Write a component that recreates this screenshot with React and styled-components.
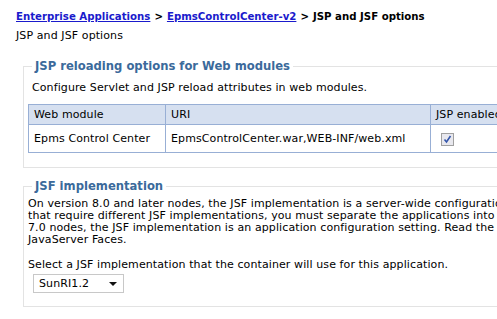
import React from 'react';
import styled, { createGlobalStyle } from 'styled-components';


const GlobalStyle = createGlobalStyle`
  html, body {
    margin: 0;
    padding: 0;
    background: #ffffff;
    overflow: hidden;
  }
  body {
    font-family: "DejaVu Sans", Verdana, sans-serif;
    font-size: 11px;
    letter-spacing: 0.1px;
    color: #000000;
  }
`;

const Page = styled.div`
  width: 640px;
  padding: 10px 0 0 16px;
`;

const Breadcrumb = styled.div`
  font-size: 10.2px;
  font-weight: bold;
  letter-spacing: 0;
  line-height: 13px;
  white-space: nowrap;
`;

const Crumb = styled.a`
  color: #1a1acc;
  text-decoration: underline;
  cursor: pointer;
`;

const Sep = styled.span`
  margin: 0 4px;
`;

const Subtitle = styled.div`
  margin-top: 6px;
  line-height: 13px;
`;

const Group = styled.fieldset`
  margin: ${p => p.$top}px 0 0 7px;
  padding: 0 0 ${p => p.$bottom}px 4px;
  border: 1px solid #e3e3e3;
  min-width: 0;
`;

const Legend = styled.legend`
  margin-left: 4px;
  padding: 0 3px;
  font-size: 11.6px;
  font-weight: bold;
  letter-spacing: 0;
  line-height: 16px;
  color: #3b6a9b;
  white-space: nowrap;
`;

const Intro = styled.p`
  margin: 7px 0 0 4px;
  line-height: 14px;
  white-space: nowrap;
`;

const Table = styled.table`
  margin-top: 9px;
  border-collapse: collapse;
  width: 640px;
`;

const Th = styled.th`
  height: 19px;
  padding: 0 5px;
  border: 1px solid #98afd5;
  background: #d6e0f0;
  font-weight: normal;
  text-align: left;
  white-space: nowrap;
  width: ${p => p.$w ? `${p.$w}px` : 'auto'};
`;

const Td = styled.td`
  height: 27px;
  padding: 0 5px;
  border: 1px solid #98afd5;
  white-space: nowrap;
`;

const Check = styled.span`
  display: inline-flex;
  align-items: center;
  justify-content: center;
  width: 11px;
  height: 11px;
  margin: 2px 0 0 5px;
  border: 1px solid #a0a0a0;
  background: #e8e8ee;
  vertical-align: middle;
`;

const Body = styled.p`
  margin: 4px 0 0;
  line-height: 12px;
  white-space: nowrap;
`;

const Prompt = styled.p`
  margin: 12px 0 0;
  line-height: 13px;
  white-space: nowrap;
`;

const Select = styled.div`
  display: flex;
  align-items: center;
  justify-content: space-between;
  box-sizing: border-box;
  width: 91px;
  height: 19px;
  margin: 3px 0 0 5px;
  padding: 0 6px 0 5px;
  border: 1px solid #c8c8c8;
  background: #ffffff;
  font-family: "DejaVu Sans", Verdana, sans-serif;
  font-size: 11px;
`;

const Arrow = styled.span`
  width: 0;
  height: 0;
  border-left: 4px solid transparent;
  border-right: 4px solid transparent;
  border-top: 4px solid #111111;
`;


function App() {

  return (
    <>
      <GlobalStyle />
      <Page>

        <Breadcrumb>
          <Crumb>Enterprise Applications</Crumb>
          <Sep>&gt;</Sep>
          <Crumb>EpmsControlCenter-v2</Crumb>
          <Sep>&gt;</Sep>
          JSP and JSF options
        </Breadcrumb>

        <Subtitle>JSP and JSF options</Subtitle>

        <Group $top={16} $bottom={14}>
          <Legend>JSP reloading options for Web modules</Legend>
          <Intro>Configure Servlet and JSP reload attributes in web modules.</Intro>

          <Table>
            <thead>
              <tr>
                <Th $w={126}>Web module</Th>
                <Th $w={254}>URI</Th>
                <Th>JSP enabled</Th>
              </tr>
            </thead>
            <tbody>
              <tr>
                <Td>Epms Control Center</Td>
                <Td>EpmsControlCenter.war,WEB-INF/web.xml</Td>
                <Td>
                  <Check>
                    <svg width="9" height="9" viewBox="0 0 9 9">
                      <path d="M1.5 4.5 L3.5 7 L7.5 1" fill="none" stroke="#3355aa" strokeWidth="1.6" />
                    </svg>
                  </Check>
                </Td>
              </tr>
            </tbody>
          </Table>
        </Group>

        <Group $top={10} $bottom={13}>
          <Legend>JSF implementation</Legend>
          <Body>
            On version 8.0 and later nodes, the JSF implementation is a server-wide configuration setting. Applications<br />
            that require different JSF implementations, you must separate the applications into different servers. On version<br />
            7.0 nodes, the JSF implementation is an application configuration setting. Read the information center about<br />
            JavaServer Faces.
          </Body>

          <Prompt>Select a JSF implementation that the container will use for this application.</Prompt>

          <Select>
            <span>SunRI1.2</span>
            <Arrow />
          </Select>
        </Group>

      </Page>
    </>
  );
}

export default App;
